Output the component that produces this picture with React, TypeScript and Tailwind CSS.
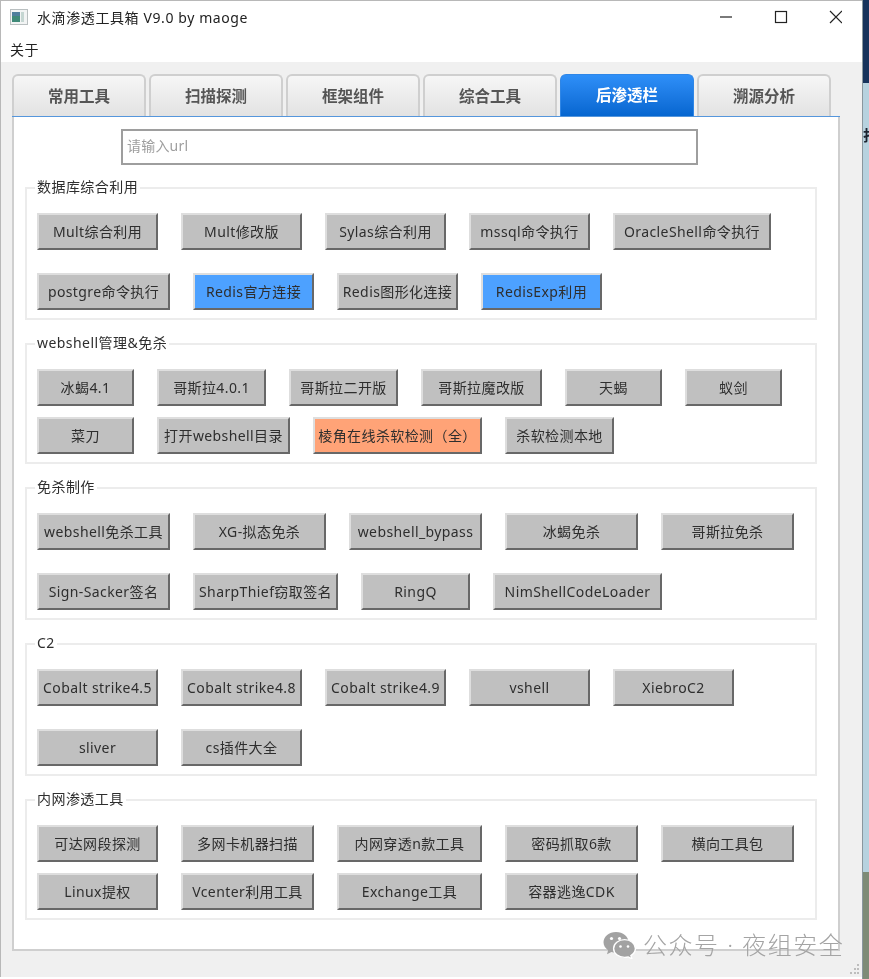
const uiFont = "font-['Noto_Sans','Noto_Sans_CJK_SC',sans-serif]";

type Btn = { text: string; w: string; tone?: "blue" | "orange" };
type Group = { title: string; rowGap: string; rows: Btn[][] };

const tabs = ["常用工具", "扫描探测", "框架组件", "综合工具", "后渗透栏", "溯源分析"];

const groups: Group[] = [
  {
    title: "数据库综合利用",
    rowGap: "gap-y-[23px]",
    rows: [
      [
        { text: "Mult综合利用", w: "w-[121px]" },
        { text: "Mult修改版", w: "w-[121px]" },
        { text: "Sylas综合利用", w: "w-[121px]" },
        { text: "mssql命令执行", w: "w-[121px]" },
        { text: "OracleShell命令执行", w: "w-[158px]" },
      ],
      [
        { text: "postgre命令执行", w: "w-[133px]" },
        { text: "Redis官方连接", w: "w-[121px]", tone: "blue" },
        { text: "Redis图形化连接", w: "w-[121px]" },
        { text: "RedisExp利用", w: "w-[121px]", tone: "blue" },
      ],
    ],
  },
  {
    title: "webshell管理&免杀",
    rowGap: "gap-y-[11px]",
    rows: [
      [
        { text: "冰蝎4.1", w: "w-[97px]" },
        { text: "哥斯拉4.0.1", w: "w-[109px]" },
        { text: "哥斯拉二开版", w: "w-[109px]" },
        { text: "哥斯拉魔改版", w: "w-[121px]" },
        { text: "天蝎", w: "w-[97px]" },
        { text: "蚁剑", w: "w-[97px]" },
      ],
      [
        { text: "菜刀", w: "w-[97px]" },
        { text: "打开webshell目录", w: "w-[133px]" },
        { text: "棱角在线杀软检测（全）", w: "w-[169px]", tone: "orange" },
        { text: "杀软检测本地", w: "w-[109px]" },
      ],
    ],
  },
  {
    title: "免杀制作",
    rowGap: "gap-y-[23px]",
    rows: [
      [
        { text: "webshell免杀工具", w: "w-[133px]" },
        { text: "XG-拟态免杀", w: "w-[133px]" },
        { text: "webshell_bypass", w: "w-[133px]" },
        { text: "冰蝎免杀", w: "w-[133px]" },
        { text: "哥斯拉免杀", w: "w-[133px]" },
      ],
      [
        { text: "Sign-Sacker签名", w: "w-[133px]" },
        { text: "SharpThief窃取签名", w: "w-[145px]" },
        { text: "RingQ", w: "w-[109px]" },
        { text: "NimShellCodeLoader", w: "w-[169px]" },
      ],
    ],
  },
  {
    title: "C2",
    rowGap: "gap-y-[23px]",
    rows: [
      [
        { text: "Cobalt strike4.5", w: "w-[121px]" },
        { text: "Cobalt strike4.8", w: "w-[121px]" },
        { text: "Cobalt strike4.9", w: "w-[121px]" },
        { text: "vshell", w: "w-[121px]" },
        { text: "XiebroC2", w: "w-[121px]" },
      ],
      [
        { text: "sliver", w: "w-[121px]" },
        { text: "cs插件大全", w: "w-[121px]" },
      ],
    ],
  },
  {
    title: "内网渗透工具",
    rowGap: "gap-y-[11px]",
    rows: [
      [
        { text: "可达网段探测", w: "w-[121px]" },
        { text: "多网卡机器扫描", w: "w-[133px]" },
        { text: "内网穿透n款工具", w: "w-[145px]" },
        { text: "密码抓取6款", w: "w-[133px]" },
        { text: "横向工具包", w: "w-[133px]" },
      ],
      [
        { text: "Linux提权", w: "w-[121px]" },
        { text: "Vcenter利用工具", w: "w-[133px]" },
        { text: "Exchange工具", w: "w-[145px]" },
        { text: "容器逃逸CDK", w: "w-[133px]" },
      ],
    ],
  },
];

function ToolButton({ text, w, tone }: Btn) {
  const bg =
    tone === "blue"
      ? "bg-[#4da1ff]"
      : tone === "orange"
        ? "bg-[#ffa377]"
        : "bg-[#c0c0c0]";
  return (
    <button
      className={`${w} ${bg} h-[37px] shrink-0 flex items-center justify-center whitespace-nowrap border-2 border-t-[#dedede] border-l-[#dedede] border-r-[#686868] border-b-[#686868] text-[14px] text-[#2e2e2e] tracking-[0.4px]`}
    >
      {text}
    </button>
  );
}

function ToolGroup({ title, rowGap, rows }: Group) {
  return (
    <div className="relative border-2 border-[#ececec] pl-[10px] pt-[24px] pb-[8px]">
      <span className="absolute left-[8px] top-[-12px] bg-white px-[2px] text-[14px] leading-[20px] tracking-[0.45px] text-[#2e2e2e]">
        {title}
      </span>
      <div className={`flex flex-col ${rowGap}`}>
        {rows.map((row, i) => (
          <div key={i} className="flex gap-x-[23px]">
            {row.map((b) => (
              <ToolButton key={b.text} {...b} />
            ))}
          </div>
        ))}
      </div>
    </div>
  );
}

function AppIcon() {
  return (
    <svg width="18" height="16" viewBox="0 0 18 16" className="shrink-0">
      <rect x="0.5" y="0.5" width="17" height="15" fill="#f2f4f4" stroke="#b9bfc0" />
      <rect x="2" y="3" width="8" height="10" fill="#3f8a78" />
      <rect x="2" y="3" width="8" height="4" fill="#4f7f9c" />
      <rect x="11" y="3" width="3" height="10" fill="#c5d6d2" />
    </svg>
  );
}

function WindowControls() {
  return (
    <svg width="122" height="14" viewBox="0 0 122 14" className="shrink-0 text-[#222222]" fill="none" stroke="currentColor" strokeWidth="1.2">
      <path d="M0 7h12" />
      <rect x="55.5" y="1.5" width="11" height="11" />
      <path d="M110 1l12 12M122 1l-12 12" />
    </svg>
  );
}

function SizeGrip() {
  return (
    <svg width="10" height="10" viewBox="0 0 10 10" className="absolute right-[2px] bottom-[3px]" fill="#bdbdbd">
      <rect x="7" y="0" width="2" height="2" />
      <rect x="4" y="4" width="2" height="2" />
      <rect x="7" y="4" width="2" height="2" />
      <rect x="0" y="8" width="2" height="2" />
      <rect x="4" y="8" width="2" height="2" />
      <rect x="7" y="8" width="2" height="2" />
    </svg>
  );
}

function WechatMark() {
  return (
    <svg width="33" height="28" viewBox="0 0 33 28" className="shrink-0">
      <path d="M13 1C6 1 0.5 5.4 0.5 11.3c0 3.3 1.8 6 4.6 8L4 23.2l4.4-2.3c1.5.4 3 .7 4.6.7 7 0 12.5-4.6 12.5-10.3S20 1 13 1z" fill="#a2a2a2" />
      <path d="M21.6 8.6c-6.2 0-11 4-11 8.9s4.8 8.9 11 8.9c1.3 0 2.5-.2 3.7-.5l3.6 1.9-1-3.2c2.7-1.7 4.5-4.2 4.5-7.1 0-4.9-4.8-8.9-10.8-8.9z" fill="#a2a2a2" stroke="#ffffff" strokeWidth="1.4" />
      <circle cx="8.5" cy="7.5" r="1.6" fill="#ffffff" />
      <circle cx="16.5" cy="7.5" r="1.6" fill="#ffffff" />
      <circle cx="17.5" cy="15.5" r="1.3" fill="#ffffff" />
      <circle cx="25" cy="15.5" r="1.3" fill="#ffffff" />
    </svg>
  );
}

export default function App() {
  return (
    <div className={`relative flex w-[869px] h-[979px] overflow-hidden blur-[0.35px] ${uiFont}`}>
      <div className="relative flex flex-col w-[862px] h-[977px] shrink-0 border-l border-t border-[#b8b8b8] bg-[#f0f0f0]">
        <div className="flex items-center justify-between h-[32px] shrink-0 bg-white pl-[9px] pr-[20px]">
          <div className="flex items-center gap-x-[9px]">
            <AppIcon />
            <span className="text-[14px] tracking-[0.6px] text-[#222222]">水滴渗透工具箱 V9.0 by maoge</span>
          </div>
          <WindowControls />
        </div>
        <div className="h-[29px] shrink-0 bg-white pl-[9px] pt-[7px] text-[14px] leading-[20px] tracking-[0.6px] text-[#222222]">关于</div>

        <div className="flex flex-col pt-[12px] pl-[11px]">
          <div className="flex gap-x-[3px]">
            {tabs.map((t) =>
              t === "后渗透栏" ? (
                <div
                  key={t}
                  className="w-[134px] h-[43px] flex items-center justify-center rounded-t-[6px] border border-b-0 border-[#2f86e6] bg-gradient-to-b from-[#2e8ff8] to-[#0465cf] text-[15.5px] font-bold text-white"
                >
                  {t}
                </div>
              ) : (
                <div
                  key={t}
                  className="w-[134px] h-[43px] flex items-center justify-center rounded-t-[6px] border-2 border-b-0 border-[#cfcfcf] bg-gradient-to-b from-[#f6f6f6] to-[#e2e2e2] text-[15.5px] font-bold text-[#555555]"
                >
                  {t}
                </div>
              ),
            )}
          </div>
          <div className="flex flex-col shrink-0 w-[828px] h-[835px] -mt-px border-2 border-t-0 border-[#cfcfcf] bg-white">
            <div className="h-px -mx-[2px] bg-[#5596dc]" />
            <div className="pl-[107px] pt-[12px]">
              <div className="flex items-center w-[577px] h-[36px] border-2 border-[#9e9e9e] bg-white pl-[4px] pb-[3px] text-[14px] tracking-[0.2px] text-[#9e9e9e]">
                请输入url
              </div>
            </div>
            <div className="flex flex-col gap-y-[23px] w-[792px] ml-[11px] mt-[22px]">
              {groups.map((g) => (
                <ToolGroup key={g.title} {...g} />
              ))}
            </div>
          </div>
        </div>
        <SizeGrip />
      </div>

      <div className="flex flex-col w-[7px] h-full shrink-0 border-l border-[#8a979e]">
        <div className="h-[83px] shrink-0 bg-[#17335c]" />
        <div className="flex-1 overflow-hidden bg-[#b7d2df] pt-[42px] text-[15px] font-bold leading-[20px] text-[#1c2430] whitespace-nowrap">
          打
        </div>
        <div className="h-[107px] shrink-0 bg-[#7e8b76]" />
      </div>

      <div className="absolute left-[603px] top-[931px] flex items-center gap-x-[7px] text-[#a4a4a4]">
        <WechatMark />
        <span className="text-[24px] leading-[28px] font-light tracking-[1.5px] whitespace-nowrap">公众号 · 夜组安全</span>
      </div>
    </div>
  );
}
